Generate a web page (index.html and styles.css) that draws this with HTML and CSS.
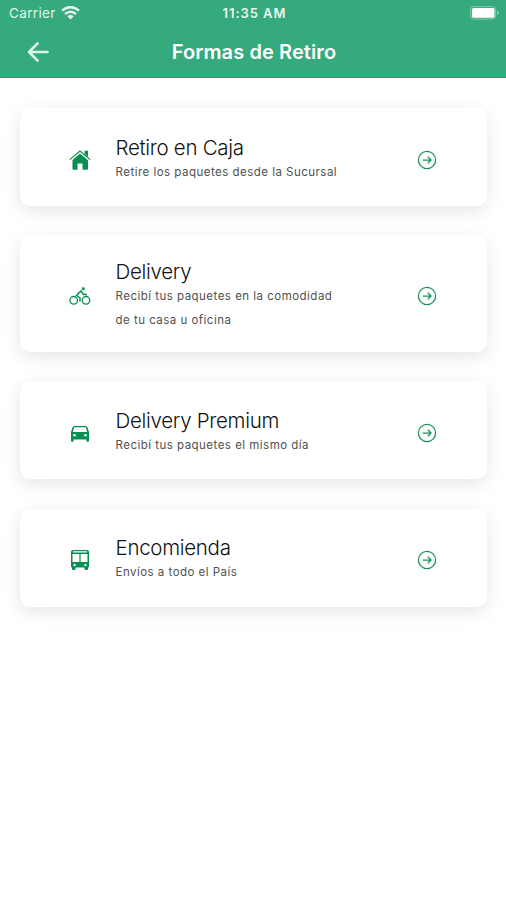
FILE: index.html
```html
<!DOCTYPE html>
<html lang="es">
<head>
<meta charset="utf-8">
<title>Formas de Retiro</title>
<link rel="stylesheet" href="styles.css">
</head>
<body>
<svg width="0" height="0" class="defs">
  <symbol id="go" viewBox="0 0 20 20"><g fill="none" stroke="currentColor" stroke-width="1.25"><circle cx="10" cy="10" r="8.6"/><path d="M5.8 10H14M10.8 6.8 14 10l-3.2 3.2"/></g></symbol>
</svg>
<header class="header">
  <div class="status">
    <div class="carrier"><span>Carrier</span>
      <svg width="19" height="14" viewBox="0 0 19 14" fill="none" stroke="currentColor" stroke-width="2.5"><path d="M1 4.6Q9.500-2.400 18 4.600M4 7.900Q9.500 3.500 15 7.900"/><path d="M6.300 10.300Q9.500 7.800 12.700 10.300L9.500 13.500Z" fill="currentColor" stroke="none"/></svg>
    </div>
    <span class="time">11:35 AM</span>
    <svg class="battery" width="30" height="14" viewBox="0 0 30 14"><rect x=".6" y=".6" width="25" height="12.400" rx="3" fill="none" stroke="#80cbae"/><rect x="2" y="2" width="22.500" height="9.800" rx="1.500" fill="#fff"/><path d="M27.200 4.500q3 2.300 0 4.600z" fill="#a5dac5"/></svg>
  </div>
  <div class="nav">
    <svg class="back" width="22" height="20" viewBox="0 0 22 20" fill="none" stroke="currentColor" stroke-width="2.600" stroke-linecap="round" stroke-linejoin="round"><path d="M20.500 10H2M10.500 1.500 2 10l8.500 8.500"/></svg>
    <h1>Formas de Retiro</h1>
  </div>
</header>
<main class="list">
  <section class="card">
    <svg class="icon" viewBox="0 0 22 22"><path fill="currentColor" d="M11 4.500 19 11.300V20a.8.8 0 0 1-.8.8H13.500V14.500h-5v6.300H4.300a.8.8 0 0 1-.8-.8V11Z"/><path d="M.8 10.700 11 2l10.200 8.700" fill="none" stroke="currentColor" stroke-width="1.100"/><path fill="currentColor" d="M15.500 1.800H19V8l-3.500-3z"/></svg>
    <div class="text"><h2>Retiro en Caja</h2><p>Retire los paquetes desde la Sucursal</p></div>
    <svg class="go"><use href="#go"/></svg>
  </section>
  <section class="card tall">
    <svg class="icon" viewBox="0 0 22 22" fill="none" stroke="currentColor" stroke-width="1.300"><circle cx="4.700" cy="15.300" r="3.800"/><circle cx="17" cy="15.300" r="3.800"/><path d="M11 16.500V13L7.500 10.500 12 6l2.500 3.500H18" stroke-width="1.500"/><circle cx="14.300" cy="3.800" r="1.300" fill="currentColor" stroke-width=".6"/></svg>
    <div class="text"><h2>Delivery</h2><p>Recibí tus paquetes en la comodidad<br>de tu casa u oficina</p></div>
    <svg class="go"><use href="#go"/></svg>
  </section>
  <section class="card">
    <svg class="icon" viewBox="0 0 22 22"><path fill="currentColor" fill-rule="evenodd" d="M5.500 4h11q1.500 0 2 1.500L20 10v9q0 .8-.8.800h-1q-.8 0-.8-.8v-1.600H4.600V19q0 .8-.8.800h-1Q2 19.800 2 19v-9l1.500-4.500Q4 4 5.500 4Zm-.2 1.300L3.800 10h14.400l-1.500-4.700Z"/><g fill="#fff"><circle cx="5.500" cy="13.300" r="1.300"/><circle cx="16.500" cy="13.300" r="1.300"/></g></svg>
    <div class="text"><h2>Delivery Premium</h2><p>Recibí tus paquetes el mismo día</p></div>
    <svg class="go"><use href="#go"/></svg>
  </section>
  <section class="card">
    <svg class="icon" viewBox="0 0 22 22"><path fill="currentColor" fill-rule="evenodd" d="M4 1h14q2 0 2 2v15.300h-1V20q0 1-1 1h-1.500q-1 0-1-1v-1.500h-9V20q0 1-1 1H4q-1 0-1-1v-1.700H2V3Q2 1 4 1ZM3.500 5v8h6.900V5Zm8.100 0v8h6.900V5ZM4 2.300V3.600h14V2.300Z"/><g fill="#fff"><circle cx="5.500" cy="16" r="1.200"/><circle cx="16.500" cy="16" r="1.200"/></g></svg>
    <div class="text"><h2>Encomienda</h2><p>Envíos a todo el País</p></div>
    <svg class="go"><use href="#go"/></svg>
  </section>
</main>
</body>
</html>
```
FILE: styles.css
```css
* { box-sizing: border-box; }
body { margin: 0; min-height: 900px; background: #fff; font-family: Inter, Roboto, sans-serif; }
h1, h2, p { margin: 0; }
.defs { display: block; height: 0; }
.header { height: 78px; background: #34aa7d; border-bottom: 1px solid #17a36a; color: #fff; }
.status { height: 26px; display: grid; grid-template-columns: 1fr auto 1fr; align-items: center; padding: 0 6px 0 9px; font-size: 13px; }
.carrier { display: flex; align-items: center; gap: 5px; font-size: 13.5px; letter-spacing: .35px; color: #e3f5ed; }
.time { font-weight: 600; font-size: 13px; letter-spacing: .95px; color: #e9f7f1; }
.battery { justify-self: end; }
.nav { height: 51px; display: grid; grid-template-columns: 87px 1fr 85px; align-items: center; }
.back { margin-left: 27px; color: #d9f5e9; }
h1 { text-align: center; font-size: 20px; font-weight: 600; line-height: 24px; letter-spacing: .1px; }
.list { display: flex; flex-direction: column; gap: 29.2px; padding: 30px 19px 30px 20px; }
.card { height: 98px; padding: 5.2px 50px 0 49px; display: grid; grid-template-columns: 22px 1fr 20px; column-gap: 24.5px; align-items: center; background: #fff; border-radius: 10px; box-shadow: 0 5px 18px rgba(0, 0, 0, .1); }
.tall { height: 117px; }
.icon { width: 22px; height: 22px; color: #078f50; }
.go { width: 20px; height: 20px; color: #16905b; }
h2 { font-size: 20.5px; font-weight: 300; line-height: 24px; letter-spacing: -.3px; color: #111; white-space: nowrap; }
p { font-size: 11.5px; line-height: 24px; letter-spacing: .48px; color: #505050; white-space: nowrap; }
```
